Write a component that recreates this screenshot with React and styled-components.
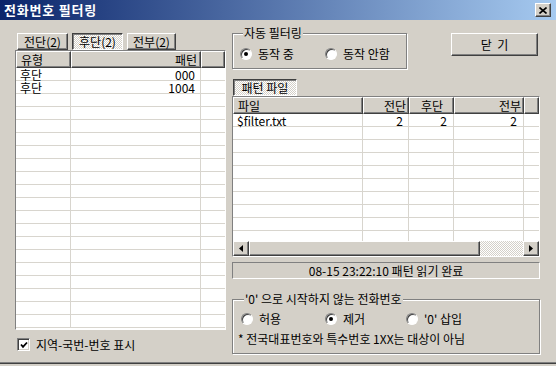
import styled, { createGlobalStyle, css } from "styled-components";

const GlobalStyle = createGlobalStyle`
  html, body {
    margin: 0;
    padding: 0;
    background: #d4d0c8;
  }
  body {
    font-family: "Noto Sans CJK KR", "Noto Sans", sans-serif;
    font-size: 12px;
    color: #000;
  }
`;

const raised = css`
  border: 1px solid;
  border-color: #fff #404040 #404040 #fff;
  box-shadow: inset -1px -1px #808080;
`;

const sunken = css`
  border: 1px solid;
  border-color: #808080 #fff #fff #808080;
  box-shadow: inset 1px 1px #404040, inset -1px -1px #d4d0c8;
`;

const dither = css`
  background: repeating-conic-gradient(#fff 0% 25%, #d4d0c8 0% 50%) 0 0 / 2px 2px;
`;

const Window = styled.div`
  width: 556px;
  height: 364px;
  background: #d4d0c8;
  display: flex;
  flex-direction: column;
  box-shadow: inset 0 -1px #404040, inset 0 -2px #808080;
`;

const TitleBar = styled.div`
  height: 20px;
  flex: none;
  display: flex;
  align-items: center;
  justify-content: space-between;
  padding: 0 5px 0 4px;
  background: linear-gradient(90deg, #0a246a 0%, #a6caf0 100%);
`;

const TitleText = styled.span`
  color: #fff;
  font-weight: bold;
  font-size: 13px;
  line-height: 20px;
  letter-spacing: 0.8px;
`;

const CloseBox = styled.span`
  width: 16px;
  height: 14px;
  box-sizing: border-box;
  background: #d4d0c8;
  display: flex;
  align-items: center;
  justify-content: center;
  ${raised}
`;

const Body = styled.div`
  flex: 1;
  display: flex;
  gap: 6px;
  padding: 6px 0 0 15px;
`;

const LeftColumn = styled.div`
  width: 211px;
  display: flex;
  flex-direction: column;
`;

const RightColumn = styled.div`
  width: 308px;
  display: flex;
  flex-direction: column;
`;

const TabRow = styled.div`
  display: flex;
  gap: 4px;
  padding-left: ${(p) => p.$indent || 0}px;
  margin-top: ${(p) => p.$top || 0}px;
`;

const Tab = styled.div`
  width: ${(p) => p.$w}px;
  height: 17px;
  box-sizing: border-box;
  display: flex;
  align-items: center;
  justify-content: center;
  line-height: 15px;
  ${(p) =>
    p.$active
      ? css`
          ${dither}
          border: 1px solid;
          border-color: #404040 #fff #fff #404040;
          box-shadow: inset 1px 1px #808080;
        `
      : raised}
`;

const ListBox = styled.div`
  width: ${(p) => p.$w}px;
  height: ${(p) => p.$h}px;
  box-sizing: border-box;
  background: #fff;
  border: 1px solid;
  border-color: #808080 #fff #fff #808080;
  display: flex;
  flex-direction: column;
  overflow: hidden;
`;

const HeaderRow = styled.div`
  display: flex;
  flex: none;
  background: #d4d0c8;
`;

const HeaderCell = styled.div`
  width: ${(p) => (p.$w ? `${p.$w}px` : "auto")};
  flex: ${(p) => (p.$w ? "none" : "1")};
  height: 17px;
  box-sizing: border-box;
  padding: 0 ${(p) => p.$pad ?? 3}px 0 4px;
  line-height: 15px;
  text-align: ${(p) => p.$align || "left"};
  ${raised}
`;

const RowsArea = styled.div`
  flex: 1;
  overflow: hidden;
`;

const Row = styled.div`
  display: flex;
  height: 13px;
`;

const Cell = styled.div`
  width: ${(p) => (p.$w ? `${p.$w}px` : "auto")};
  flex: ${(p) => (p.$w ? "none" : "1")};
  box-sizing: border-box;
  height: 13px;
  line-height: 13px;
  padding: 0 ${(p) => p.$pad ?? 6}px 0 4px;
  text-align: ${(p) => p.$align || "left"};
  box-shadow: inset 0 -1px #d8d5ce ${(p) => (p.$last ? "" : ", inset -1px 0 #d8d5ce")};
  white-space: nowrap;
`;

const ScrollBar = styled.div`
  display: flex;
  height: 15px;
  flex: none;
  ${dither}
`;

const ScrollButton = styled.div`
  width: 16px;
  height: 15px;
  box-sizing: border-box;
  background: #d4d0c8;
  display: flex;
  align-items: center;
  justify-content: center;
  ${raised}
`;

const ScrollThumb = styled.div`
  width: ${(p) => p.$w}px;
  height: 15px;
  box-sizing: border-box;
  background: #d4d0c8;
  ${raised}
`;

const ScrollTrack = styled.div`
  flex: 1;
`;

const CheckRow = styled.label`
  display: flex;
  align-items: center;
  gap: 6px;
  margin: 8px 0 0 2px;
  line-height: 13px;
`;

const CheckBox = styled.span`
  width: 13px;
  height: 13px;
  box-sizing: border-box;
  background: #fff;
  display: flex;
  align-items: center;
  justify-content: center;
  ${sunken}
`;

const TopRow = styled.div`
  display: flex;
  align-items: flex-start;
`;

const Group = styled.fieldset`
  margin: ${(p) => p.$top || 0}px 0 0 0;
  width: ${(p) => p.$w}px;
  box-sizing: border-box;
  padding: ${(p) => p.$pad};
  border: 1px solid #808080;
  box-shadow: inset 1px 1px #fff, 1px 1px #fff;
  min-width: 0;
`;

const Legend = styled.legend`
  padding: 0 1px;
  margin-left: 3px;
  line-height: 14px;
  background: #d4d0c8;
`;

const RadioRow = styled.div`
  display: flex;
  align-items: center;
  height: 12px;
`;

const RadioOption = styled.label`
  width: ${(p) => (p.$w ? `${p.$w}px` : "auto")};
  display: flex;
  align-items: center;
  gap: 6px;
  line-height: 12px;
`;

const RadioCircle = styled.span`
  width: 12px;
  height: 12px;
  box-sizing: border-box;
  border-radius: 50%;
  background: #fff;
  border: 1px solid;
  border-color: #808080 #fff #fff #808080;
  box-shadow: inset 1px 1px #404040;
  display: flex;
  align-items: center;
  justify-content: center;

  &::after {
    content: "";
    width: 4px;
    height: 4px;
    border-radius: 50%;
    background: ${(p) => (p.$checked ? "#000" : "transparent")};
  }
`;

const Button = styled.div`
  width: 87px;
  height: 23px;
  box-sizing: border-box;
  margin: 7px 2px 0 auto;
  display: flex;
  align-items: center;
  justify-content: center;
  white-space: pre;
  ${raised}
`;

const StatusBox = styled.div`
  height: 17px;
  margin-top: 5px;
  box-sizing: border-box;
  border: 1px solid;
  border-color: #808080 #fff #fff #808080;
  text-align: center;
  line-height: 15px;
`;

const Note = styled.div`
  margin-top: 7px;
  line-height: 14px;
  margin-left: -3px;
`;

const Arrow = ({ dir }) => (
  <svg width="4" height="7" viewBox="0 0 4 7">
    {dir === "left" ? <polygon points="4,0 4,7 0,3.5" fill="#000" /> : <polygon points="0,0 0,7 4,3.5" fill="#000" />}
  </svg>
);

function ListView({ w, h, columns, rows, rowCount, scroll }) {
  const filled = Array.from({ length: rowCount }, (_, i) => rows[i] || []);
  return (
    <ListBox $w={w} $h={h}>
      <HeaderRow>
        {columns.map((c, i) => (
          <HeaderCell key={i} $w={c.w} $align={c.hAlign || c.align} $pad={c.hPad}>
            {c.label}
          </HeaderCell>
        ))}
      </HeaderRow>
      <RowsArea>
        {filled.map((r, ri) => (
          <Row key={ri}>
            {columns.map((c, ci) => (
              <Cell key={ci} $w={c.w} $align={c.align} $pad={c.pad} $last={ci === columns.length - 1}>
                {r[ci] || ""}
              </Cell>
            ))}
          </Row>
        ))}
      </RowsArea>
      {scroll && (
        <ScrollBar>
          <ScrollButton>
            <Arrow dir="left" />
          </ScrollButton>
          <ScrollThumb $w={231} />
          <ScrollTrack />
          <ScrollButton>
            <Arrow dir="right" />
          </ScrollButton>
        </ScrollBar>
      )}
    </ListBox>
  );
}

const leftColumns = [
  { label: "유형", w: 55 },
  { label: "패턴", w: 130, align: "right", hPad: 3 },
  { label: "" },
];

const rightColumns = [
  { label: "파일", w: 130 },
  { label: "전단", w: 46, align: "right", hPad: 2 },
  { label: "후단", w: 45, align: "right", hAlign: "center", pad: 7 },
  { label: "전부", w: 70, align: "right", hPad: 2, pad: 7 },
  { label: "" },
];

export default function App() {
  return (
    <>
      <GlobalStyle />
      <Window>
        <TitleBar>
          <TitleText>전화번호 필터링</TitleText>
          <CloseBox>
            <svg width="8" height="7" viewBox="0 0 8 7">
              <path d="M0.5 0.5 L7.5 6.5 M7.5 0.5 L0.5 6.5" stroke="#000" strokeWidth="1.6" />
            </svg>
          </CloseBox>
        </TitleBar>
        <Body>
          <LeftColumn>
            <TabRow $indent={2} $top={7}>
              <Tab $w={51}>전단(2)</Tab>
              <Tab $w={51} $active>
                후단(2)
              </Tab>
              <Tab $w={49}>전부(2)</Tab>
            </TabRow>
            <ListView
              w={211}
              h={280}
              columns={leftColumns}
              rows={[
                ["후단", "000"],
                ["후단", "1004"],
              ]}
              rowCount={20}
            />
            <CheckRow>
              <CheckBox>
                <svg width="8" height="8" viewBox="0 0 8 8">
                  <polyline points="1,3.5 3,5.8 7,1.5" fill="none" stroke="#000" strokeWidth="1.8" />
                </svg>
              </CheckBox>
              지역-국번-번호 표시
            </CheckRow>
          </LeftColumn>
          <RightColumn>
            <TopRow>
              <Group $w={175} $pad="8px 8px 8px 7px">
                <Legend>자동 필터링</Legend>
                <RadioRow>
                  <RadioOption $w={85}>
                    <RadioCircle $checked />
                    동작 중
                  </RadioOption>
                  <RadioOption>
                    <RadioCircle />
                    동작 안함
                  </RadioOption>
                </RadioRow>
              </Group>
              <Button>닫  기</Button>
            </TopRow>
            <TabRow $top={10} $indent={1}>
              <Tab $w={64} $active>
                패턴 파일
              </Tab>
            </TabRow>
            <ListView
              w={308}
              h={161}
              columns={rightColumns}
              rows={[["$filter.txt", "2", "2", "2"]]}
              rowCount={10}
              scroll
            />
            <StatusBox>08-15 23:22:10 패턴 읽기 완료</StatusBox>
            <Group $w={308} $top={13} $pad="7px 8px 7px 8px">
              <Legend>'0' 으로 시작하지 않는 전화번호</Legend>
              <RadioRow>
                <RadioOption $w={84}>
                  <RadioCircle />
                  허용
                </RadioOption>
                <RadioOption $w={81}>
                  <RadioCircle $checked />
                  제거
                </RadioOption>
                <RadioOption>
                  <RadioCircle />
                  '0' 삽입
                </RadioOption>
              </RadioRow>
              <Note>* 전국대표번호와 특수번호 1XX는 대상이 아님</Note>
            </Group>
          </RightColumn>
        </Body>
      </Window>
    </>
  );
}
